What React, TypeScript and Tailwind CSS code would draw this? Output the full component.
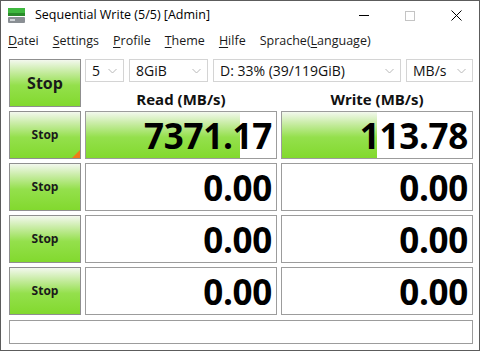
import React from "react";

const font = { fontFamily: '"Open Sans", "Noto Sans", "Liberation Sans", sans-serif' };

function Chevron() {
  return (
    <svg width="9" height="6" viewBox="0 0 9 6" className="shrink-0">
      <path d="M0.5 1 L4.5 5 L8.5 1" fill="none" stroke="#b8b8b8" strokeWidth="1" />
    </svg>
  );
}

function Select({ w, label }: { w: string; label: string }) {
  return (
    <div className={`${w} h-[23px] border border-[#d4d4d4] bg-white flex items-center justify-between pl-[6px] pr-[6px]`}>
      <span className="text-[14px] text-[#111] leading-none">{label}</span>
      <Chevron />
    </div>
  );
}

function StopButton({ big, mark }: { big?: boolean; mark?: boolean }) {
  return (
    <div className="relative h-full border border-[#8f8f8f] bg-[linear-gradient(to_bottom,#f3f8ee_0%,#c8eca4_25%,#94e04c_55%,#82d92e_100%)] flex items-center justify-center">
      <span className={big ? "text-[16px] font-bold text-[#1a1a1a]" : "text-[12px] font-bold text-[#1a1a1a]"}>Stop</span>
      {mark && (
        <div className="absolute right-0 bottom-0 w-0 h-0 border-l-[8px] border-l-transparent border-b-[8px] border-b-[#f07a1a]" />
      )}
    </div>
  );
}

function Cell({ value, fill }: { value: string; fill: number }) {
  return (
    <div className="relative h-full border border-[#9c9c9c] bg-white overflow-hidden">
      {fill > 0 && (
        <div
          className="absolute left-0 top-0 bottom-0 bg-[linear-gradient(to_bottom,#f3f8ee_0%,#c8eca4_25%,#94e04c_55%,#82d92e_100%)]"
          style={{ width: `${fill}%` }}
        />
      )}
      <div className="relative h-full flex items-center justify-end pr-[4px]">
        <span className="text-[35px] font-bold text-black leading-none tracking-[-0.3px]">{value}</span>
      </div>
    </div>
  );
}

function Menu({ u, rest }: { u: string; rest: string }) {
  return (
    <span>
      <span className="underline underline-offset-2">{u}</span>
      {rest}
    </span>
  );
}

export default function App() {
  const rows = [
    { r: "7371.17", w: "113.78", rf: 81, wf: 50 },
    { r: "0.00", w: "0.00", rf: 0, wf: 0 },
    { r: "0.00", w: "0.00", rf: 0, wf: 0 },
    { r: "0.00", w: "0.00", rf: 0, wf: 0 },
  ];
  return (
    <div style={font} className="w-[480px] h-[351px] bg-white border border-[#5c5c5c] flex flex-col">
      {/* title bar */}
      <div className="h-[29px] flex items-center shrink-0">
        <svg width="18" height="16" viewBox="0 0 18 16" className="ml-[7px]">
          <rect x="0" y="0" width="17" height="5" fill="#3fb83f" />
          <rect x="0" y="5" width="17" height="3" fill="#2a8a2a" />
          <rect x="0" y="9" width="17" height="6" rx="1" fill="#8a8f94" />
          <rect x="2" y="11" width="5" height="2" fill="#d0d4d8" />
        </svg>
        <span className="ml-[9px] text-[12.5px] text-black">Sequential Write (5/5) [Admin]</span>
        <div className="ml-auto flex items-center">
          <div className="w-[46px] flex justify-center">
            <div className="w-[10px] h-px bg-black" />
          </div>
          <div className="w-[46px] flex justify-center">
            <div className="w-[10px] h-[10px] border border-[#c4c4c4]" />
          </div>
          <div className="w-[46px] flex justify-center">
            <svg width="11" height="11" viewBox="0 0 11 11">
              <path d="M0.5 0.5 L10.5 10.5 M10.5 0.5 L0.5 10.5" stroke="#000" strokeWidth="1" />
            </svg>
          </div>
        </div>
      </div>
      {/* menu */}
      <div className="h-[22px] flex items-center gap-[14px] pl-[7px] text-[12.5px] text-[#1a1a1a] shrink-0">
        <Menu u="D" rest="atei" />
        <Menu u="S" rest="ettings" />
        <Menu u="P" rest="rofile" />
        <Menu u="T" rest="heme" />
        <Menu u="H" rest="ilfe" />
        <span>
          Sprache(<span className="underline underline-offset-2">L</span>anguage)
        </span>
      </div>
      {/* content */}
      <div className="pl-[8px] pt-[7px] flex flex-col gap-[4px]">
        <div className="grid grid-cols-[72px_192px_192px] gap-x-[4px] h-[48px]">
          <StopButton big />
          <div className="col-span-2 flex flex-col">
            <div className="flex gap-[5px]">
              <Select w="w-[39px]" label="5" />
              <Select w="w-[79px]" label="8GiB" />
              <Select w="w-[188px]" label="D: 33% (39/119GiB)" />
              <Select w="w-[67px]" label="MB/s" />
            </div>
            <div className="grid grid-cols-2 gap-x-[4px] flex-1 items-end">
              <div className="text-center text-[15px] font-bold text-[#111] leading-[16px]">Read (MB/s)</div>
              <div className="text-center text-[15px] font-bold text-[#111] leading-[16px]">Write (MB/s)</div>
            </div>
          </div>
        </div>
        {rows.map((row, i) => (
          <div key={i} className="grid grid-cols-[72px_192px_192px] gap-x-[4px] h-[48px]">
            <StopButton mark={i === 0} />
            <Cell value={row.r} fill={row.rf} />
            <Cell value={row.w} fill={row.wf} />
          </div>
        ))}
        <div className="w-[464px] h-[24px] border border-[#9c9c9c] bg-white mt-px" />
      </div>
    </div>
  );
}
